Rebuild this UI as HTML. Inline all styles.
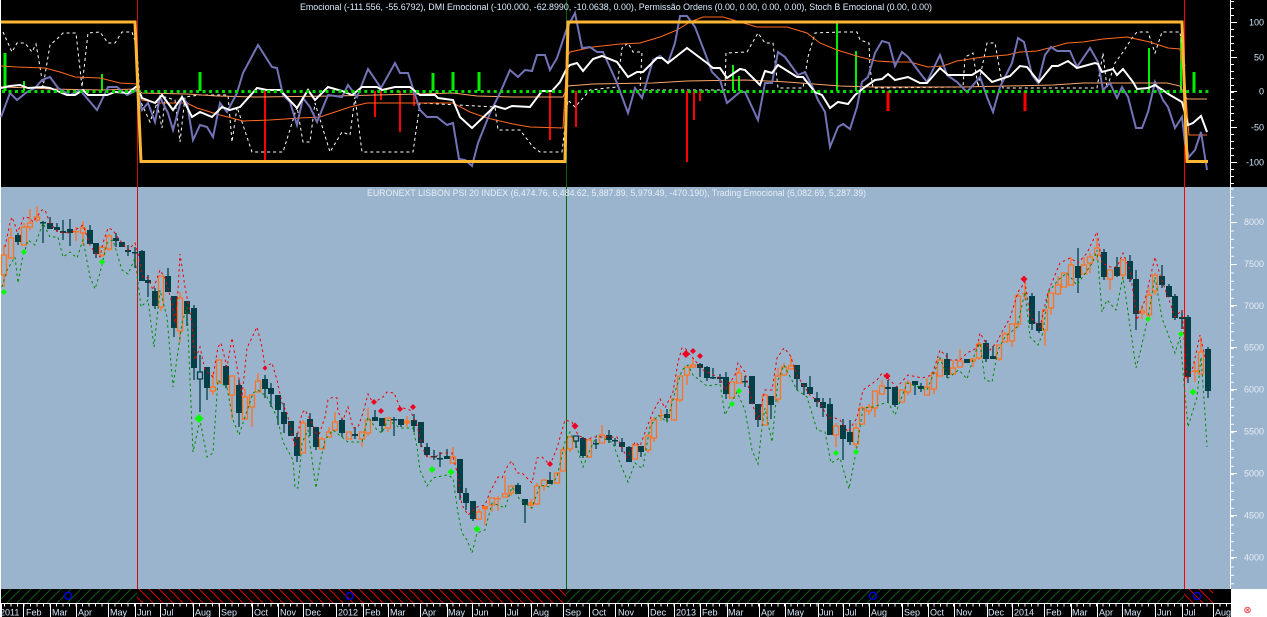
<!DOCTYPE html>
<html><head><meta charset="utf-8"><style>
html,body{margin:0;padding:0;background:#000;overflow:hidden}
svg{display:block}
text{font-family:"Liberation Sans",Arial,sans-serif;font-size:9px}
</style></head><body>
<svg xmlns="http://www.w3.org/2000/svg" width="1267" height="617" viewBox="0 0 1267 617">
<defs>
<pattern id="hg" patternUnits="userSpaceOnUse" width="10" height="10"><path d="M-1 11L11 -1" stroke="#0a5c12" stroke-width="1" fill="none"/></pattern>
<pattern id="hr" patternUnits="userSpaceOnUse" width="10" height="10"><path d="M-1 -1L11 11" stroke="#e00000" stroke-width="1" fill="none"/></pattern>
</defs>
<rect width="1267" height="617" fill="#000"/>
<rect x="0" y="187" width="1267" height="402" fill="#9bb4cd"/>
<rect x="1231" y="589" width="36" height="28" fill="#fff"/>
<rect x="0" y="0" width="1" height="617" fill="#fff"/>

<!-- hatch band -->
<rect x="1" y="589" width="136" height="14" fill="url(#hg)"/>
<rect x="137" y="589" width="429" height="14" fill="url(#hr)"/>
<rect x="566" y="589" width="618" height="14" fill="url(#hg)"/>
<rect x="1184" y="589" width="29" height="14" fill="url(#hr)"/>
<g fill="none" stroke="#0000d8" stroke-width="1.5"><circle cx="68" cy="595.7" r="3.5"/><circle cx="349.5" cy="596" r="3.5"/><circle cx="873" cy="595.7" r="3.5"/><circle cx="1197" cy="596" r="3.5"/></g>

<!-- date axis -->
<path d="M1 603.5H1231" stroke="#fff" stroke-width="1"/>
<path d="M4 605H1231" stroke="#fff" stroke-width="3" stroke-dasharray="1 5.5"/>
<path d="M1.500 603V617M23.500 603V617M50.500 603V617M76.500 603V617M108.500 603V617M135.500 603V617M160.500 603V617M193.500 603V617M219.500 603V617M252.500 603V617M278.500 603V617M303.500 603V617M336.500 603V617M363.500 603V617M388.500 603V617M420.500 603V617M447.500 603V617M472.500 603V617M505.500 603V617M531.500 603V617M563.500 603V617M589.500 603V617M615.500 603V617M648.500 603V617M674.500 603V617M700.500 603V617M727.500 603V617M759.500 603V617M785.500 603V617M818.500 603V617M843.500 603V617M869.500 603V617M902.500 603V617M928.500 603V617M954.500 603V617M987.500 603V617M1012.500 603V617M1044.500 603V617M1071.500 603V617M1097.500 603V617M1122.500 603V617M1155.500 603V617M1182.500 603V617M1213.500 603V617" stroke="#fff" stroke-width="1" fill="none"/>
<g fill="#d6e8fb">
<text x="0" y="615.500">2011</text><text x="26" y="615.500">Feb</text><text x="52" y="615.500">Mar</text><text x="78" y="615.500">Apr</text><text x="110" y="615.500">May</text><text x="137" y="615.500">Jun</text><text x="162" y="615.500">Jul</text><text x="195" y="615.500">Aug</text><text x="221" y="615.500">Sep</text><text x="254" y="615.500">Oct</text><text x="280" y="615.500">Nov</text><text x="305" y="615.500">Dec</text><text x="338" y="615.500">2012</text><text x="365" y="615.500">Feb</text><text x="390" y="615.500">Mar</text><text x="422" y="615.500">Apr</text><text x="448" y="615.500">May</text><text x="474" y="615.500">Jun</text><text x="507" y="615.500">Jul</text><text x="533" y="615.500">Aug</text><text x="565" y="615.500">Sep</text><text x="592" y="615.500">Oct</text><text x="618" y="615.500">Nov</text><text x="650" y="615.500">Dec</text><text x="676" y="615.500">2013</text><text x="702" y="615.500">Feb</text><text x="728" y="615.500">Mar</text><text x="761" y="615.500">Apr</text><text x="787" y="615.500">May</text><text x="819" y="615.500">Jun</text><text x="845" y="615.500">Jul</text><text x="871" y="615.500">Aug</text><text x="904" y="615.500">Sep</text><text x="930" y="615.500">Oct</text><text x="956" y="615.500">Nov</text><text x="988" y="615.500">Dec</text><text x="1014" y="615.500">2014</text><text x="1046" y="615.500">Feb</text><text x="1072" y="615.500">Mar</text><text x="1099" y="615.500">Apr</text><text x="1124" y="615.500">May</text><text x="1157" y="615.500">Jun</text><text x="1184" y="615.500">Jul</text><text x="1215" y="615.500">Aug</text>
</g>
<circle cx="1247.500" cy="610" r="2.800" fill="none" stroke="#f05050" stroke-width="1"/><path d="M1246 608.500l3 3M1249 608.500l-3 3" stroke="#e03030" stroke-width=".8"/>

<!-- right axis -->
<path d="M1230.500 0V589" stroke="#fff" stroke-width="1"/>
<path d="M1232.500 1V187" stroke="#fff" stroke-width="3" stroke-dasharray="1 6" fill="none"/>
<path d="M1232.500 187V589" stroke="#fff" stroke-width="3" stroke-dasharray="1 7.400" stroke-dashoffset="-1.500" fill="none"/>
<path d="M1231 22.500h6M1231 57.500h6M1231 91.500h6M1231 127.500h6M1231 162.500h6M1231 222.500h6M1231 264.500h6M1231 305.500h6M1231 347.500h6M1231 389.500h6M1231 431.500h6M1231 473.500h6M1231 515.500h6M1231 557.500h6" stroke="#fff" stroke-width="1"/>
<g text-anchor="end" fill="#cfe3f7">
<text x="1264" y="25.500">100</text><text x="1264" y="60.500">50</text><text x="1264" y="94.500">0</text><text x="1264" y="130.500">-50</text><text x="1264" y="165.500">-100</text>
</g>
<g text-anchor="end" fill="#e4ecf5">
<text x="1264" y="225">8000</text><text x="1264" y="267">7500</text><text x="1264" y="309">7000</text><text x="1264" y="350.500">6500</text><text x="1264" y="392.500">6000</text><text x="1264" y="434.500">5500</text><text x="1264" y="476.500">5000</text><text x="1264" y="518.500">4500</text><text x="1264" y="560.500">4000</text>
</g>

<!-- vertical markers -->
<path d="M137.500 0V589" stroke="#c81014" stroke-width="1"/>
<path d="M566.500 0V589" stroke="#0a620f" stroke-width="1"/>
<path d="M1184.500 0V589" stroke="#ff0000" stroke-width="1"/>

<!-- TOP PANEL -->
<path d="M5 53V91M433 73V91M453 72V91M479 72V91M200 72V91M1194 72V91" stroke="#00ee00" stroke-width="3" fill="none"/>
<path d="M24 81V91M102 74V91M733 65V91M739 76V91M837 22V91M856 51V91M1149 48V91M1181 37V91" stroke="#00ee00" stroke-width="2" fill="none"/>
<path d="M265 91V162M375 91V117M381 91V100M400 91V132M414 91V106M550 91V140M576 91V127M687 91V162M694 91V120M700 91V101" stroke="#ff0000" stroke-width="2" fill="none"/>
<path d="M888 91V111M1025 91V111" stroke="#ff0000" stroke-width="3" fill="none"/>

<polyline fill="none" stroke="#fff" stroke-width="1" stroke-dasharray="3 3" points="3,32 12,52 17,43 25,43 32,52 36,44 40,67 43,87 50,45 58,38 63,33 76,33 82,87 88,33 100,32 108,43 115,43 122,32 132,32 137,47 140,100 150,122 157,103 162,128 165,97 175,100 180,142 185,97 200,95 228,95 232,142 237,107 252,152 283,152 297,107 303,142 310,142 315,103 330,152 342,132 350,135 355,97 362,152 413,152 420,103 495,107 498,130 520,130 533,147 540,152 562,152 568,100 575,107 590,90 607,88 617,87 622,48 628,43 633,52 642,52 640,90 660,90 713,90 725,90 726,53 747,52 758,33 765,43 773,43 778,88 803,88 808,57 815,33 840,32 857,32 860,40 869,43 870,68 873,88 963,87 965,57 973,53 978,87 987,43 995,43 1003,88 1097,88 1103,53 1107,88 1115,63 1123,52 1132,38 1137,32 1148,32 1155,53 1162,32 1180,32 1185,67"/>
<polyline fill="none" stroke="#ff6a20" stroke-width="1" points="1,66 17,67 45,68 60,72 75,77 100,78 120,83 137,84 142,100 160,103 187,103 197,108 220,115 243,121 270,120 300,118 320,117 350,107 367,103 420,103 453,103 470,112 487,118 513,124 530,127 563,128 567,57 570,52 593,47 620,44 640,43 660,37 677,30 690,22 703,17 723,17 740,22 757,27 787,27 807,33 820,43 837,50 860,57 877,61 893,62 910,62 928,67 943,66 957,61 983,57 1007,55 1020,52 1037,51 1053,47 1067,43 1083,42 1103,39 1127,37 1150,42 1168,48 1180,49 1185,83 1189,135 1207,135"/>
<polyline fill="none" stroke="#ffa468" stroke-width="1" points="1,87 33,88 50,89 100,90 135,89 142,93 187,94 217,96 257,97 333,96 420,94 453,93 477,96 513,97 563,97 568,86 593,84 653,83 687,81 745,80 787,82 840,86 873,87 920,87 963,87 1053,85 1083,83 1167,83 1180,86 1187,99 1207,99"/>
<polyline fill="none" stroke="#7373b8" stroke-width="2" points="1,117 10,93 17,100 27,92 35,88 42,80 50,77 58,88 70,95 80,90 97,110 108,87 117,87 127,95 137,90 142,110 148,103 155,122 160,97 168,113 173,130 182,97 187,103 193,140 200,125 207,127 213,137 220,103 227,112 237,93 243,73 258,45 272,67 277,68 283,95 290,102 297,125 303,98 310,107 317,122 328,95 342,97 348,85 357,97 368,69 381,88 395,63 400,73 408,73 420,110 427,117 437,117 447,125 453,123 459,159 465,160 472,166 478,143 490,113 500,93 510,70 518,77 525,70 532,71 537,55 545,55 550,70 557,58 567,28 575,13 582,48 590,47 597,52 603,52 617,83 628,113 635,88 642,98 653,60 660,56 668,63 675,43 680,16 687,16 695,27 705,53 712,72 720,80 727,103 740,92 745,92 758,120 765,83 772,83 778,52 785,57 798,75 805,72 813,88 818,100 825,112 830,147 838,127 843,124 850,129 857,107 862,82 868,77 875,53 882,41 889,43 895,66 902,52 908,57 920,73 927,82 940,55 947,75 957,82 967,92 980,77 987,97 993,112 1000,87 1012,63 1018,38 1024,42 1032,75 1038,83 1045,55 1051,47 1057,51 1070,51 1077,67 1090,48 1098,62 1103,90 1110,83 1117,98 1122,87 1128,97 1136,128 1142,128 1148,112 1155,82 1163,100 1168,107 1175,128 1182,117 1185,143 1189,157 1195,150 1201,132 1207,170"/>
<polyline fill="none" stroke="#fff" stroke-width="2" points="1,88 10,86 20,85 28,88 43,87 50,88 67,95 75,95 83,90 88,95 107,95 115,92 128,93 137,86 142,98 155,103 162,95 173,110 182,97 192,117 200,112 212,117 222,107 230,110 240,107 257,88 267,90 280,90 297,108 308,90 315,100 328,87 342,91 352,95 362,87 377,87 382,90 395,87 410,87 420,95 435,95 438,98 453,100 460,117 472,128 495,106 505,109 512,106 530,107 542,91 552,91 560,82 567,68 570,65 577,63 583,71 593,59 602,56 617,62 628,77 637,72 643,72 657,58 662,58 668,63 687,48 707,63 713,68 720,68 727,78 740,69 745,70 760,85 765,71 772,73 778,65 797,77 803,77 815,92 822,95 830,108 838,102 848,104 855,95 865,87 875,80 882,79 888,74 895,80 908,77 920,83 927,83 940,68 948,75 972,75 980,70 992,82 1010,76 1020,66 1027,67 1039,82 1052,66 1058,66 1068,61 1077,68 1095,63 1098,64 1102,72 1113,69 1117,75 1123,69 1133,82 1137,89 1148,88 1155,85 1170,95 1182,102 1185,113 1188,125 1193,123 1201,116 1207,132"/>
<path d="M2 91.500H1209" stroke="#00e000" stroke-width="3" stroke-dasharray="3 3.470" fill="none"/>
<polyline fill="none" stroke="#ffb733" stroke-width="3" points="1,22 135,22 141,161.500 565,161.500 568,22 1182,22 1187,161.500 1208,161.500"/>
<text x="300" y="10" fill="#d9ecff" textLength="632" lengthAdjust="spacingAndGlyphs">Emocional (-111.556, -55.6792), DMI Emocional (-100.000, -62.8990, -10.0638, 0.00), Permissão Ordens (0.00, 0.00, 0.00, 0.00), Stoch B Emocional (0.00, 0.00)</text>
<text x="367" y="196" fill="#e6eef6" textLength="499" lengthAdjust="spacingAndGlyphs">EURONEXT LISBON PSI 20 INDEX (6,474.76, 6,484.62, 5,887.89, 5,979.49, -470.190), Trading Emocional (6,082.69, 5,287.39)</text>

<!-- CANDLES: dark wicks -->
<path fill="none" stroke="#023f47" stroke-width="1.300" d="M18 233V245M43 221V243M50 217V229M57 223V232M63 220V240M70 219V246M90 225V244M96 243V258M116 233V247M128 245V256M135 247V268M142 250V281M148 275V297M155 288V309M168 268V292M174 296V337M187 301V326M194 305V380M200 355V372M200 379V412M207 367V400M226 365V388M239 380V427M265 375V398M271 383V407M278 395V425M284 403V433M297 433V462M310 413V436M316 427V450M342 418V437M355 427V439M375 410V421M382 418V432M394 417V436M401 419V427M414 414V432M421 422V447M427 443V457M434 450V460M440 452V467M447 449V459M460 459V500M466 488V510M473 501V521M518 483V494M525 499V523M550 472V484M576 441V448M583 437V458M596 439V449M609 430V443M615 438V446M622 438V452M629 446V462M641 446V457M667 409V422M700 363V377M707 366V381M713 368V379M720 374V383M726 372V399M745 376V387M752 376V404M758 404V427M771 396V419M797 365V390M804 383V395M810 376V394M817 392V407M823 398V417M830 398V435M843 419V460M850 420V445M888 380V403M895 387V407M915 381V395M921 383V392M947 353V378M986 340V362M993 346V359M1032 293V330M1039 311V333M1078 248V293M1104 249V280M1117 257V277M1130 255V282M1136 270V330M1162 265V288M1169 284V297M1175 294V320M1182 310V329M1188 315V383M1208 347V398"/>
<!-- dark bodies -->
<path fill="none" stroke="#023f47" stroke-width="6" d="M18 235V242M43 222V223.500M50 223V229M57 227V230M63 231V233M70 229V233M90 230V244M96 243V254M116 238V241M122 242V247M128 250V252M135 252V253.500M142 251V281M148 280V283M155 291V306M168 276V292M174 296V328M187 301V314M194 308V368M207 367V388M226 366V385M239 385V413M265 379V389M271 388V394M278 395V410M284 412V424M291 421V436M297 437V456M310 419V427M316 427V447M342 420V433M355 434V436M375 417V421M382 418V426M394 419V420.500M401 419V425M414 420V426M421 422V443M427 447V455M434 456V457.500M440 458V459.500M447 456V459M460 459V493M466 493V503M473 501V519M518 485V494M525 499V505M550 480V484M583 438V456M596 443V444.500M609 435V440M615 440V441.500M622 442V447M629 447V462M641 446V452M667 414V418M700 364V368M707 367V378M713 377V378.500M720 377V379M726 377V394M745 381V382.500M752 376V404M758 404V420M771 396V405M797 365V379M804 383V387M810 387V394M817 398V402M823 402V408M830 404V435M843 425V439M850 432V442M888 387V389M895 387V405M915 381V385M921 386V389M947 359V375M967 359V363M986 343V359M993 356V359M1032 296V324M1039 323V331M1078 266V278M1104 252V277M1117 267V276M1130 261V279M1136 279V314M1162 276V285M1169 286V297M1175 296V318M1182 317V319M1188 317V377M1208 349V391"/>
<path fill="none" stroke="#023f47" stroke-width="1.300" d="M197.500 372h5V379h-5zM573.500 436h5V441h-5z"/>
<!-- orange wicks -->
<path fill="none" stroke="#ff7020" stroke-width="1.300" d="M4 245V255M4 275V287M11 228V238M24 223V227M30 209V223M30 227V230M37 206V217M37 220V222M76 227V241M83 221V228M83 233V245M102 255V257M109 234V236M109 249V251M161 307V311M180 292V298M180 331V342M213 373V387M213 391V395M232 395V419M245 389V397M245 419V420M252 407V427M258 373V381M303 420V423M322 437V439M329 427V432M335 412V422M362 439V447M368 408V420M368 433V436M388 428V432M407 416V427M453 447V457M479 509V512M485 506V525M492 505V512M498 496V511M505 476V494M511 493V496M531 499V509M537 483V486M537 504V505M544 486V491M557 483V484M563 447V450M570 436V437M570 449V452M602 425V435M648 434V436M648 450V453M654 417V420M654 438V442M661 409V421M680 400V402M687 375V385M693 358V365M739 368V373M778 368V376M778 399V403M784 363V367M791 356V366M836 423V426M836 435V447M856 423V428M856 444V448M862 406V408M862 424V425M869 404V407M869 411V415M875 408V417M882 380V386M882 394V395M908 380V383M908 392V395M927 378V387M934 389V394M940 357V360M953 360V368M960 349V361M973 361V367M979 342V344M979 358V360M999 359V361M1005 332V334M1012 341V347M1018 293V296M1018 324V328M1025 283V300M1045 330V346M1051 308V315M1058 276V285M1058 294V295M1071 257V265M1084 257V265M1090 253V257M1090 263V273M1097 238V248M1097 255V260M1110 279V290M1123 275V280M1142 305V311M1142 313V319M1149 288V295M1149 315V317M1155 273V275M1155 291V295M1195 362V382M1201 337V352"/>
<!-- orange crosses / filled -->
<path fill="none" stroke="#ff7020" stroke-width="6" d="M76 231V232.500M485 506V509.500M498 498V499.300M661 415V416.300M1025 293V294.300M1195 370.500V372"/>
<!-- orange hollow bodies -->
<path fill="none" stroke="#ff7020" stroke-width="1.300" d="M1.500 255h5V275h-5zM8.500 238h5V258h-5zM21.500 227h5V245h-5zM27.500 223h5V227h-5zM34.500 217h5V220h-5zM80.500 228h5V233h-5zM99.500 247h5V255h-5zM106.500 236h5V249h-5zM158.500 276h5V307h-5zM177.500 298h5V331h-5zM210.500 387h5V391h-5zM216.500 360h5V383h-5zM229.500 376h5V395h-5zM242.500 397h5V419h-5zM249.500 395h5V407h-5zM255.500 381h5V392h-5zM300.500 423h5V453h-5zM319.500 439h5V449h-5zM326.500 432h5V437h-5zM332.500 422h5V430h-5zM346.500 432h5V439h-5zM359.500 432h5V439h-5zM365.500 420h5V433h-5zM385.500 418h5V428h-5zM404.500 421h5V423h-5zM450.500 457h5V463h-5zM476.500 512h5V519h-5zM489.500 498h5V505h-5zM502.500 494h5V497h-5zM508.500 486h5V493h-5zM528.500 503h5V505h-5zM534.500 486h5V504h-5zM541.500 480h5V486h-5zM554.500 473h5V483h-5zM560.500 450h5V471h-5zM567.500 437h5V449h-5zM586.500 440h5V457h-5zM599.500 435h5V443h-5zM632.500 445h5V459h-5zM645.500 436h5V450h-5zM651.500 420h5V438h-5zM671.500 399h5V420h-5zM677.500 376h5V400h-5zM684.500 367h5V375h-5zM690.500 365h5V367h-5zM729.500 382h5V398h-5zM736.500 373h5V383h-5zM762.500 395h5V425h-5zM775.500 376h5V399h-5zM781.500 367h5V375h-5zM788.500 366h5V369h-5zM833.500 426h5V435h-5zM853.500 428h5V444h-5zM859.500 408h5V424h-5zM866.500 407h5V411h-5zM872.500 391h5V408h-5zM879.500 386h5V394h-5zM899.500 390h5V402h-5zM905.500 383h5V392h-5zM924.500 387h5V395h-5zM931.500 373h5V389h-5zM937.500 360h5V376h-5zM950.500 368h5V374h-5zM957.500 361h5V367h-5zM970.500 359h5V361h-5zM976.500 344h5V358h-5zM996.500 345h5V359h-5zM1002.500 334h5V342h-5zM1009.500 324h5V341h-5zM1015.500 296h5V324h-5zM1042.500 310h5V330h-5zM1048.500 293h5V308h-5zM1055.500 285h5V294h-5zM1061.500 273h5V287h-5zM1068.500 265h5V285h-5zM1081.500 265h5V274h-5zM1087.500 257h5V263h-5zM1094.500 248h5V255h-5zM1107.500 270h5V279h-5zM1120.500 260h5V275h-5zM1139.500 311h5V313h-5zM1146.500 295h5V315h-5zM1152.500 275h5V291h-5zM1198.500 352h5V374h-5z"/>

<!-- lower / upper bands -->
<polyline fill="none" stroke="#008a00" stroke-width="1" stroke-dasharray="2.500 3" points="2,287 7,270 15,257 18,283 22,260 28,240 35,245 43,223 50,237 58,237 63,257 70,252 77,258 83,240 90,277 95,289 100,273 107,243 113,240 122,270 128,274 135,258 141,307 148,300 154,347 160,290 167,317 173,387 182,323 187,307 193,452 200,420 207,457 213,453 218,380 227,388 233,420 239,435 253,393 258,390 267,397 277,417 283,442 293,460 295,488 298,488 302,443 308,430 316,488 320,463 325,440 333,430 342,437 348,442 362,442 368,417 377,430 382,433 388,420 400,428 413,428 417,447 420,470 427,486 433,478 437,477 447,475 453,478 458,513 462,533 467,540 472,553 477,533 485,530 492,503 498,505 505,508 512,487 520,500 532,508 540,485 550,487 557,477 565,442 570,432 577,447 583,467 590,450 597,435 613,443 620,463 628,482 635,463 640,467 643,468 645,455 650,427 658,415 667,422 675,392 682,370 688,365 693,375 707,386 720,384 725,415 737,392 745,410 752,450 758,464 762,427 765,408 772,442 778,380 784,365 797,390 807,397 817,430 825,432 831,463 840,458 849,489 857,447 863,408 873,407 888,402 895,415 907,383 927,390 940,358 948,378 959,370 967,379 975,353 980,343 985,380 992,382 998,350 1005,337 1017,327 1025,292 1030,337 1038,345 1043,333 1048,293 1058,280 1067,273 1077,285 1093,262 1097,250 1102,312 1107,300 1116,310 1123,277 1136,368 1140,353 1148,317 1155,277 1162,318 1175,353 1180,337 1184,383 1188,427 1197,397 1201,357 1205,413 1207,447"/>
<polyline fill="none" stroke="#f00000" stroke-width="1" stroke-dasharray="2.500 3" points="5,247 10,223 12,217 15,225 17,232 20,227 24,217 30,218 33,222 42,210 45,210 50,223 58,232 70,233 80,227 83,225 90,245 95,253 100,257 103,243 108,228 113,230 118,238 128,250 135,243 138,253 143,277 148,278 153,290 160,270 165,278 172,303 175,323 178,290 180,254 185,287 192,323 195,360 200,347 205,370 213,377 218,347 221,343 227,367 232,338 237,367 242,397 247,348 257,327 262,347 265,367 272,363 277,380 282,403 287,413 295,447 302,413 305,410 312,423 318,438 325,417 328,400 333,397 337,398 338,412 343,420 348,407 353,428 358,427 363,413 368,394 373,403 383,397 387,392 394,393 400,407 410,410 417,425 422,447 427,457 435,457 442,453 452,453 457,472 462,505 468,515 477,507 485,505 490,492 498,477 502,478 508,465 512,461 517,473 522,473 532,483 537,458 542,457 550,465 557,448 565,420 572,422 578,435 587,440 593,437 607,437 617,437 627,458 635,442 640,446 647,427 653,412 660,399 665,408 673,392 678,362 682,348 685,348 692,357 703,370 720,378 725,390 735,375 738,363 745,372 752,403 758,420 765,390 772,390 777,358 784,348 790,355 798,377 810,395 820,403 828,418 835,418 840,420 848,432 857,418 863,390 877,380 882,373 897,387 908,375 922,378 932,375 940,350 950,360 960,360 967,353 977,348 980,333 990,350 997,342 1002,332 1010,318 1018,292 1025,282 1030,317 1040,327 1048,292 1060,263 1070,258 1078,263 1087,253 1097,232 1102,263 1110,267 1117,267 1123,253 1130,270 1137,320 1145,300 1155,257 1160,275 1168,297 1175,317 1182,310 1187,380 1193,367 1200,335 1205,357"/>

<!-- diamonds -->
<path fill="#00ff00" d="M4 289l3 3-3 3-3-3zM24 249l3 3-3 3-3-3zM102 259l3 3-3 3-3-3zM199 414l4.500 4.500-4.500 4.500-4.500-4.500zM432 466l3.500 3.500-3.500 3.500-3.500-3.500zM451 468.500l3.500 3.500-3.500 3.500-3.500-3.500zM477 525.500l3.500 3.500-3.500 3.500-3.500-3.500zM732 401l3 3-3 3-3-3zM739 388l3 3-3 3-3-3zM836 450l3 3-3 3-3-3zM856 449l3 3-3 3-3-3zM1148 316l3 3-3 3-3-3zM1181 331l3 3-3 3-3-3zM1193 388.500l3.500 3.500-3.500 3.500-3.500-3.500z"/>
<path fill="#f00020" d="M265 365.500l2.500 2.500-2.500 2.500-2.500-2.500zM374 399l3 3-3 3-3-3zM381 408l3 3-3 3-3-3zM400 406l3 3-3 3-3-3zM413 404l3 3-3 3-3-3zM575 422.500l3.500 3.500-3.500 3.500-3.500-3.500zM550 461l3 3-3 3-3-3zM686 350l4 4-4 4-4-4zM693 348l3 3-3 3-3-3zM700 353l3 3-3 3-3-3zM887 372.500l3.500 3.500-3.500 3.500-3.500-3.500zM1024 275.500l3.500 3.500-3.500 3.500-3.500-3.500z"/>
</svg>
</body></html>
